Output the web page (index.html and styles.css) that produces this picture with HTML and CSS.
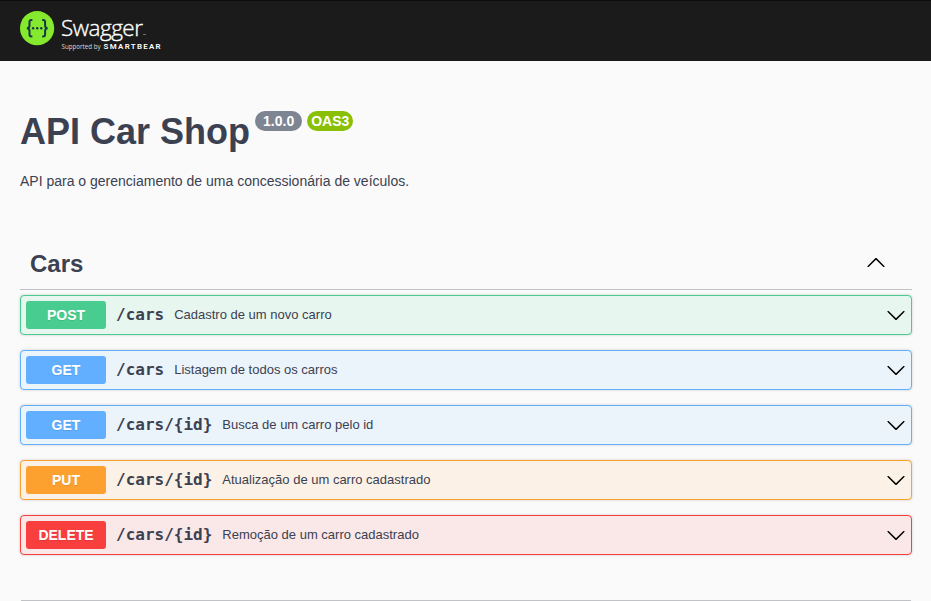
FILE: index.html
```html
<!DOCTYPE html>
<html lang="pt-BR">
<head>
<meta charset="utf-8">
<title>API Car Shop</title>
<link rel="stylesheet" href="styles.css">
</head>
<body>
<svg class="defs" aria-hidden="true">
  <symbol id="arrow" viewBox="0 0 20 20"><path d="M17.418 6.109c.272-.268.709-.268.979 0s.271.701 0 .969l-7.908 7.83c-.27.268-.707.268-.979 0l-7.908-7.83c-.27-.268-.27-.701 0-.969.271-.268.709-.268.979 0L10 13.25l7.418-7.141z"/></symbol>
</svg>
<header class="topbar">
  <svg class="logo" viewBox="0 0 150 46">
    <circle cx="17.1" cy="17.2" r="17.1" fill="#85ea2d"/>
    <g fill="none" stroke="#173647" stroke-width="2">
      <path d="M12.4 8.9h-.9q-2 0-2 2v3.6q0 2.7-2.6 2.7 2.6 0 2.6 2.7v3.6q0 2 2 2h.9"/>
      <path d="M22.2 8.9h.9q2 0 2 2v3.6q0 2.7 2.6 2.7-2.6 0-2.6 2.7v3.6q0 2-2 2h-.9"/>
    </g>
    <g fill="#173647"><circle cx="13.1" cy="17.2" r="1.2"/><circle cx="17.2" cy="17.2" r="1.2"/><circle cx="21.3" cy="17.2" r="1.2"/></g>
    <text class="brand" x="41" y="24.5" textLength="82">Swagger</text>
    <path d="M123 23.5h3" stroke="#888" stroke-width=".8"/>
    <text class="support" x="41.6" y="38.4" textLength="39">Supported by</text>
    <text class="smartbear" x="83.6" y="38.4" textLength="57">SMARTBEAR</text>
  </svg>
</header>
<main class="wrapper">
  <section class="info">
    <h1 class="title">API Car Shop<span class="badges"><span class="badge">1.0.0</span><span class="badge oas">OAS3</span></span></h1>
    <p class="description">API para o gerenciamento de uma concessionária de veículos.</p>
  </section>
  <section class="tag-section">
    <h2 class="tag"><span>Cars</span><svg class="arrow up"><use href="#arrow"/></svg></h2>
    <div class="op post"><span class="method">POST</span><span class="path">/cars</span><span class="summary">Cadastro de um novo carro</span><svg class="arrow"><use href="#arrow"/></svg></div>
    <div class="op get"><span class="method">GET</span><span class="path">/cars</span><span class="summary">Listagem de todos os carros</span><svg class="arrow"><use href="#arrow"/></svg></div>
    <div class="op get"><span class="method">GET</span><span class="path">/cars/{id}</span><span class="summary">Busca de um carro pelo id</span><svg class="arrow"><use href="#arrow"/></svg></div>
    <div class="op put"><span class="method">PUT</span><span class="path">/cars/{id}</span><span class="summary">Atualização de um carro cadastrado</span><svg class="arrow"><use href="#arrow"/></svg></div>
    <div class="op delete"><span class="method">DELETE</span><span class="path">/cars/{id}</span><span class="summary">Remoção de um carro cadastrado</span><svg class="arrow"><use href="#arrow"/></svg></div>
  </section>
  <section class="models"></section>
</main>
</body>
</html>
```
FILE: styles.css
```css
* { box-sizing: border-box; }
body { margin: 0; background: #fafafa; color: #3b4151; font-family: "Liberation Sans", Arial, sans-serif; }
.defs { display: none; }
.topbar { height: 61px; padding: 10px 20px 0; background: #1b1b1b; border-top: 1px solid #0c0c10; }
.logo { display: block; width: 150px; height: 46px; }
.logo text { fill: #fff; font-family: "Open Sans", sans-serif; }
.logo .brand { font-size: 22.5px; font-weight: 300; stroke: #fff; stroke-width: .35px; }
.logo .support { font-size: 6.2px; fill: #ddd; }
.logo .smartbear { font-family: Roboto, sans-serif; font-size: 7.9px; font-weight: 600; }
.wrapper { width: 892px; margin-left: 20px; }
.info { height: 177px; padding-top: 50px; }
.title { display: flex; margin: 0; font-size: 36px; line-height: 41px; font-weight: 700; }
.badges { display: flex; gap: 5px; margin-left: 5px; }
.badge { height: 20px; padding: 0 8px; border-radius: 10px; background: #7d8492; color: #fff; font-size: 14px; line-height: 20px; }
.badge.oas { padding: 0 4px; background: #89bf04; }
.description { margin: 20px 0 0; font-size: 14px; line-height: 18px; }
.tag { display: flex; align-items: center; justify-content: space-between; height: 52px; margin: 0 0 5px; padding: 0 26px 0 10px; border-bottom: 1px solid rgba(59, 65, 81, .3); font-size: 24px; line-height: 28px; }
.arrow { width: 20px; height: 20px; fill: #000; }
.arrow.up { margin-bottom: 2px; transform: rotate(180deg); }
.op { display: flex; align-items: center; height: 40px; margin-bottom: 15px; padding: 5px; border: 1px solid; border-radius: 4px; box-shadow: 0 0 3px rgba(0, 0, 0, .19); }
.method { width: 80px; height: 28px; border-radius: 3px; color: #fff; text-align: center; font-size: 14px; line-height: 28px; font-weight: 700; text-shadow: 0 1px 0 rgba(0, 0, 0, .1); }
.path { padding: 0 10px; font: 700 16px/20px "DejaVu Sans Mono", monospace; }
.summary { flex: 1; font-size: 13px; line-height: 16px; }
.post { border-color: #49cc90; background: #e8f6f0; }
.post .method { background: #49cc90; }
.get { border-color: #61affe; background: #ebf3fb; }
.get .method { background: #61affe; }
.put { border-color: #fca130; background: #fbf1e6; }
.put .method { background: #fca130; }
.delete { border-color: #f93e3e; background: #fae7e7; }
.delete .method { background: #f93e3e; }
.models { height: 1px; margin: 45px 1px 0; background: rgba(59, 65, 81, .3); }
```
